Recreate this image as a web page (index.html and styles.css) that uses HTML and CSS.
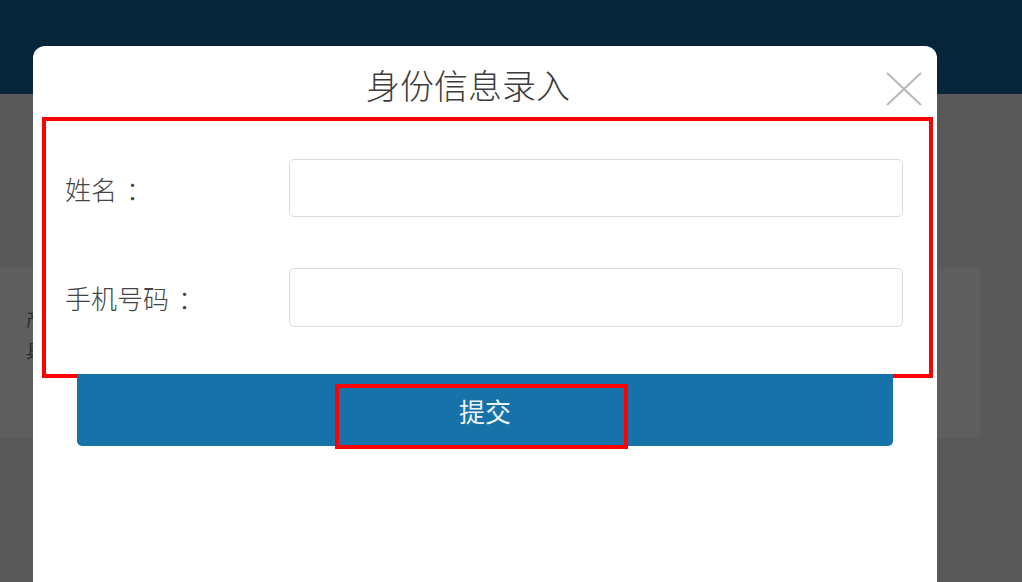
FILE: index.html
```html
<!DOCTYPE html>
<html lang="zh-CN">
<head>
    <meta charset="UTF-8">
    <meta name="viewport" content="width=device-width, initial-scale=1.0">
    <title>身份信息录入</title>
    <link rel="stylesheet" href="styles.css">
</head>
<body>
    <div class="page">
        <div class="topbar"></div>
        <div class="page-body">
            <div class="info-card">
                <p class="info-line">产品</p>
                <p class="info-line">具体</p>
            </div>
        </div>
    </div>

    <div class="modal">
        <div class="modal-header">
            <h2 class="modal-title">身份信息录入</h2>
            <button class="modal-close" aria-label="关闭">
                <svg width="36" height="34" viewBox="0 0 36 34">
                    <line x1="1" y1="1" x2="35" y2="33" stroke="#b9b9b9" stroke-width="2"/>
                    <line x1="35" y1="1" x2="1" y2="33" stroke="#b9b9b9" stroke-width="2"/>
                </svg>
            </button>
        </div>

        <form class="form-box">
            <div class="form-row">
                <label class="form-label" for="name">姓名<span class="colon">：</span></label>
                <input class="form-input" id="name" type="text">
            </div>
            <div class="form-row">
                <label class="form-label" for="phone">手机号码<span class="colon">：</span></label>
                <input class="form-input" id="phone" type="text">
            </div>
        </form>

        <div class="submit-wrapper">
            <button class="submit-btn" type="button">提交</button>
            <div class="submit-mark"></div>
        </div>
    </div>
</body>
</html>
```

FILE: styles.css
```css
body {
    margin: 0;
    padding: 0;
    background-color: #595959;
    font-family: "Noto Sans CJK SC", "Noto Sans", sans-serif;
    overflow: hidden;
    height: 582px;
    position: relative;
}

.topbar {
    height: 94px;
    background-color: #06243a;
}

.page-body {
    padding-top: 174px;
}

.info-card {
    width: 980px;
    height: 170px;
    box-sizing: border-box;
    background-color: #5e5e5e;
    padding: 38px 0 0 26px;
}

.info-line {
    margin: 0 0 8px;
    font-size: 18px;
    line-height: 24px;
    color: #2a2a2a;
}

.modal {
    position: absolute;
    top: 46px;
    left: 33px;
    width: 904px;
    height: 560px;
    background-color: #ffffff;
    border-radius: 12px 12px 0 0;
}

.modal-header {
    height: 71px;
    display: flex;
    justify-content: center;
    align-items: center;
    position: relative;
}

.modal-title {
    margin: 0 34px 0 0;
    font-size: 34px;
    font-weight: 300;
    color: #3c3c3c;
    padding-top: 6px;
}

.modal-close {
    position: absolute;
    top: 26px;
    right: 15px;
    padding: 0;
    border: none;
    background: none;
    line-height: 0;
    cursor: pointer;
}

.form-box {
    margin: 0 4px 0 9px;
    border: 4px solid #ff0000;
    padding: 38px 26px 47px 19px;
    display: flex;
    flex-direction: column;
    gap: 51px;
}

.form-row {
    display: flex;
    align-items: center;
}

.form-label {
    width: 224px;
    flex-shrink: 0;
    font-size: 26px;
    font-weight: 300;
    color: #444444;
}

.colon {
    margin-left: 9px;
}

.form-input {
    flex: 1;
    height: 58px;
    box-sizing: border-box;
    border: 1px solid #dcdcdc;
    border-radius: 5px;
    outline: none;
}

.form-row + .form-row .form-input {
    height: 59px;
}

.submit-wrapper {
    position: relative;
    margin: -4px 44px 0;
}

.submit-btn {
    display: block;
    width: 100%;
    height: 72px;
    border: none;
    border-radius: 0 0 5px 5px;
    background-color: #1672a9;
    color: #eef4f8;
    font-family: "Noto Sans CJK SC", "Noto Sans", sans-serif;
    font-size: 26px;
    cursor: pointer;
}

.submit-mark {
    position: absolute;
    top: 10px;
    left: 258px;
    width: 293px;
    height: 65px;
    box-sizing: border-box;
    border: 4px solid #ff0000;
    pointer-events: none;
}
```
